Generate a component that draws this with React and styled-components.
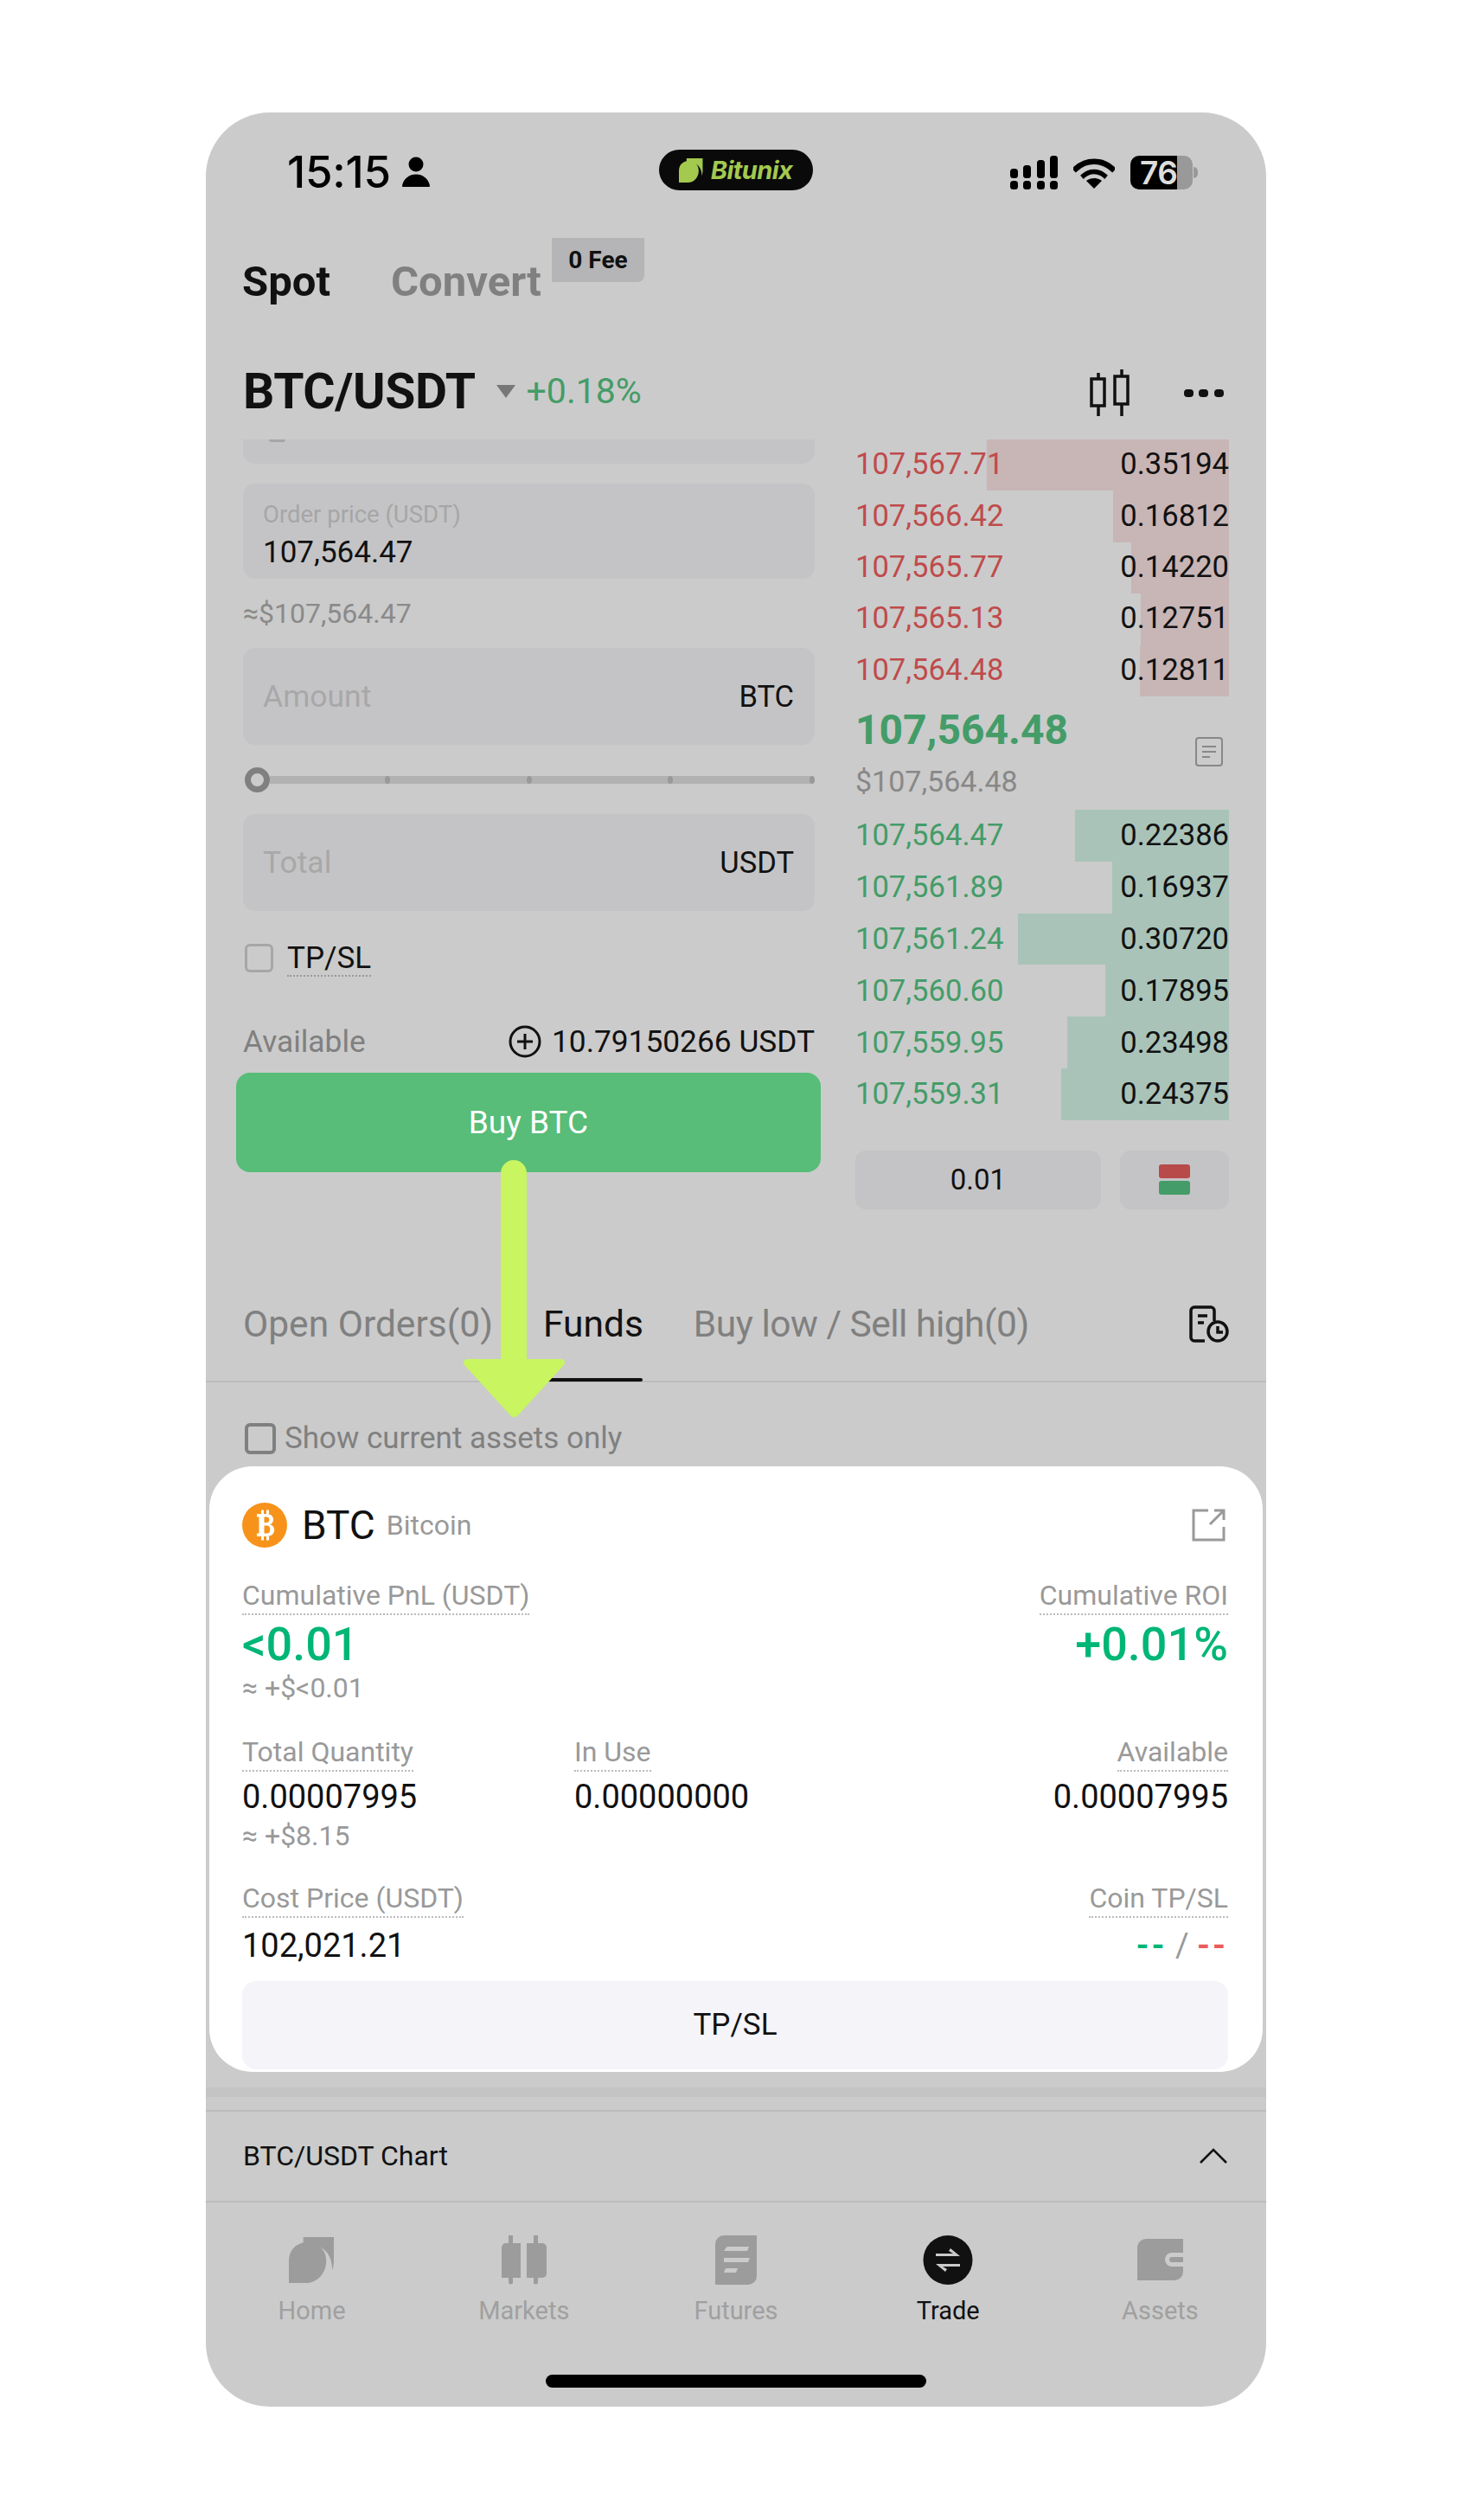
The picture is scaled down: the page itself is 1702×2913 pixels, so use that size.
import React from 'react';
import styled, { createGlobalStyle } from 'styled-components';

const GlobalStyle = createGlobalStyle`
  html, body {
    margin: 0;
    padding: 0;
    background: #fff;
    font-family: Roboto, "Liberation Sans", sans-serif;
  }
  * { box-sizing: border-box; }
`;

const Phone = styled.div`
  position: relative;
  display: flex;
  flex-direction: column;
  width: 1226px;
  height: 2652px;
  margin: 130px 0 131px 238px;
  background: #cbcbcb;
  border-radius: 74px;
  overflow: hidden;
  color: #111;
`;

const StatusBar = styled.div`
  display: grid;
  grid-template-columns: 1fr 178px 1fr;
  height: 90px;
  padding-top: 43px;
  padding-left: 94px;
  padding-right: 85px;
`;

const Clock = styled.div`
  display: flex;
  align-items: center;
  gap: 13px;
  padding-top: 2px;
  font-family: Inter, sans-serif;
  font-size: 51px;
  font-weight: 500;
  letter-spacing: -0.2px;
  line-height: 47px;
  color: #000;
`;

const Pill = styled.div`
  display: flex;
  align-items: center;
  justify-content: center;
  gap: 9px;
  height: 47px;
  margin-left: -5px;
  margin-right: 5px;
  border-radius: 24px;
  background: #0a0a0a;
  color: #a3c94f;
  font-family: Inter, sans-serif;
  font-size: 29px;
  font-weight: 700;
  font-style: italic;
  letter-spacing: -0.6px;
`;

const StatusIcons = styled.div`
  display: flex;
  align-items: center;
  justify-content: flex-end;
  gap: 18px;
  padding-top: 4px;
`;

const Battery = styled.div`
  position: relative;
  width: 72px;
  height: 39px;
  border-radius: 10px;
  background: linear-gradient(90deg, #000 54px, #999 54px);
  color: #ddd;
  font-family: Inter, sans-serif;
  font-size: 37px;
  font-weight: 600;
  line-height: 39px;
  padding-left: 11px;
  letter-spacing: -0.5px;
  &::after {
    content: '';
    position: absolute;
    right: -6px;
    top: 13px;
    width: 5px;
    height: 13px;
    border-radius: 0 5px 5px 0;
    background: #999;
  }
`;

const ModeTabs = styled.div`
  display: flex;
  align-items: center;
  gap: 70px;
  height: 70px;
  margin-top: 70px;
  margin-bottom: 2px;
  padding-left: 42px;
`;

const ModeTab = styled.div`
  position: relative;
  font-size: 49px;
  font-weight: 700;
  color: ${(p) => (p.$active ? '#111' : '#808080')};
`;

const FeeBadge = styled.span`
  position: absolute;
  left: 186px;
  top: -22px;
  width: 107px;
  height: 51px;
  display: flex;
  align-items: center;
  justify-content: center;
  background: #b5b5b7;
  border-radius: 0 0 8px 0;
  color: #111;
  font-size: 28px;
  font-weight: 700;
`;

const PairRow = styled.div`
  display: flex;
  align-items: center;
  height: 70px;
  margin-top: 55px;
  padding-left: 43px;
  padding-right: 49px;
`;

const PairName = styled.div`
  font-size: 57px;
  font-weight: 700;
  letter-spacing: -0.4px;
`;

const Caret = styled.span`
  width: 0;
  height: 0;
  margin-left: 24px;
  border-left: 11px solid transparent;
  border-right: 11px solid transparent;
  border-top: 15px solid #777;
`;

const PairChange = styled.div`
  margin-left: 13px;
  font-size: 41px;
  color: #449c68;
`;

const PairIcons = styled.div`
  margin-left: auto;
  display: flex;
  align-items: center;
  gap: 63px;
  padding-top: 3px;
`;

const TradeGrid = styled.div`
  display: grid;
  grid-template-columns: 661px 432px;
  column-gap: 47px;
  margin-top: 21px;
  padding-left: 43px;
`;

const FormColumn = styled.div`
  display: flex;
  flex-direction: column;
`;

const ClippedField = styled.div`
  position: relative;
  height: 28px;
  margin-bottom: 23px;
  background: #c4c4c6;
  border-radius: 0 0 14px 14px;
  &::before {
    content: '';
    position: absolute;
    left: 30px;
    top: 0;
    width: 19px;
    height: 3px;
    background: #a6a6a6;
    border-radius: 0 0 10px 10px;
  }
`;

const PriceField = styled.div`
  display: flex;
  flex-direction: column;
  height: 110px;
  padding: 21px 23px 0;
  background: #c4c4c6;
  border-radius: 14px;
`;

const FieldLabel = styled.div`
  font-size: 27.5px;
  line-height: 30px;
  color: #a6a6a6;
`;

const FieldValue = styled.div`
  margin-top: 9px;
  font-size: 35px;
  line-height: 40px;
  color: #111;
`;

const ApproxRow = styled.div`
  display: flex;
  align-items: center;
  height: 80px;
  font-size: 32px;
  color: #8a8a8a;
`;

const InputField = styled.div`
  display: flex;
  align-items: center;
  justify-content: space-between;
  height: 112px;
  padding: 0 24px 0 23px;
  background: #c4c4c6;
  border-radius: 14px;
  font-size: 34.5px;
  color: #111;
`;

const Placeholder = styled.span`
  font-size: 35.5px;
  color: #a8a8a8;
`;

const SliderRow = styled.div`
  display: flex;
  align-items: center;
  height: 80px;
  padding-left: 2px;
`;

const SliderThumb = styled.span`
  flex: none;
  width: 29px;
  height: 29px;
  border-radius: 50%;
  border: 7px solid #808080;
  background: #cbcbcb;
`;

const SliderTrack = styled.div`
  flex: 1;
  height: 9px;
  display: flex;
  align-items: center;
  justify-content: space-between;
  padding-left: 133px;
  background: #b2b2b2;
  border-radius: 0 5px 5px 0;
`;

const SliderTick = styled.span`
  width: 6px;
  height: 9px;
  border-radius: 50%;
  background: #999;
`;

const CheckRow = styled.div`
  display: flex;
  align-items: flex-start;
  gap: 16px;
  margin-top: 38px;
  padding-left: 2px;
`;

const Checkbox = styled.span`
  flex: none;
  width: ${(p) => p.$size}px;
  height: ${(p) => p.$size}px;
  border: ${(p) => p.$line}px solid ${(p) => p.$color};
  border-radius: 6px;
`;

const DottedLabel = styled.span`
  font-size: 35px;
  line-height: 34px;
  padding-bottom: 2px;
  border-bottom: 2px dotted #999;
  color: #111;
`;

const AvailableRow = styled.div`
  display: flex;
  align-items: center;
  justify-content: space-between;
  height: 36px;
  margin-top: 57px;
  font-size: 35.3px;
`;

const AvailableLabel = styled.span`
  color: #808080;
`;

const AvailableValue = styled.span`
  display: flex;
  align-items: center;
  gap: 12px;
  color: #111;
`;

const BuyButton = styled.div`
  display: flex;
  align-items: center;
  justify-content: center;
  height: 115px;
  margin: 18px -7px 0 -8px;
  background: #57bd78;
  border-radius: 16px;
  color: #fff;
  font-size: 37px;
`;

const BookColumn = styled.div`
  display: flex;
  flex-direction: column;
`;

const BookRow = styled.div`
  position: relative;
  display: flex;
  align-items: center;
  justify-content: space-between;
  height: ${(p) => p.$height}px;
  padding-bottom: ${(p) => p.$lift}px;
  font-size: 34.6px;
`;

const DepthBar = styled.span`
  position: absolute;
  top: 0;
  right: 0;
  bottom: 0;
  background: ${(p) => (p.$side === 'ask' ? '#c8b5b5' : '#a9c3b9')};
`;

const BookPrice = styled.span`
  position: relative;
  color: ${(p) => (p.$side === 'ask' ? '#bf4b4b' : '#449c68')};
`;

const BookQty = styled.span`
  position: relative;
  color: #111;
`;

const MidBlock = styled.div`
  position: relative;
  height: 131px;
`;

const MidPrice = styled.div`
  margin-top: 10px;
  font-size: 48px;
  line-height: 58px;
  font-weight: 700;
  color: #449c68;
`;

const MidFiat = styled.div`
  margin-top: 10px;
  font-size: 34px;
  line-height: 40px;
  color: #888;
`;

const MidIcon = styled.span`
  position: absolute;
  right: 7px;
  top: 47px;
`;

const BookControls = styled.div`
  display: grid;
  grid-template-columns: 284px 126px;
  justify-content: space-between;
  height: 68px;
  margin-top: 35px;
`;

const ControlBox = styled.div`
  display: flex;
  flex-direction: ${(p) => (p.$stack ? 'column' : 'row')};
  align-items: center;
  justify-content: center;
  gap: 3px;
  background: #c4c4c6;
  border-radius: 12px;
  font-size: 33px;
  color: #111;
`;

const SideBar = styled.span`
  width: 36px;
  height: 16px;
  border-radius: 3px;
  background: ${(p) => p.$color};
`;

const OrderTabs = styled.div`
  display: flex;
  align-items: stretch;
  height: 132px;
  margin-top: 68px;
  padding: 0 43px;
  border-bottom: 2px solid #bcbcbc;
`;

const OrderTab = styled.div`
  position: relative;
  display: flex;
  align-items: center;
  margin-right: ${(p) => p.$gap}px;
  font-size: 42.5px;
  letter-spacing: ${(p) => (p.$tight ? '-0.5px' : '0')};
  color: ${(p) => (p.$active ? '#111' : '#808080')};
  &::after {
    content: '';
    display: ${(p) => (p.$active ? 'block' : 'none')};
    position: absolute;
    left: 0;
    right: 1px;
    bottom: -1px;
    height: 4px;
    background: #111;
    border-radius: 2px;
  }
`;

const OrdersIcon = styled.div`
  margin-left: auto;
  display: flex;
  align-items: center;
`;

const ShowRow = styled.div`
  display: flex;
  align-items: center;
  gap: 10px;
  margin-top: 47px;
  padding-left: 45px;
  font-size: 35px;
  line-height: 35px;
  color: #808080;
`;

const AssetCard = styled.div`
  height: 700px;
  margin: 14px 4px 0;
  padding: 43px 40px 0 38px;
  background: #fff;
  border-radius: 50px;
`;

const AssetHead = styled.div`
  display: flex;
  align-items: center;
  height: 51px;
`;

const AssetSymbol = styled.span`
  margin-left: 17px;
  font-size: 46px;
  color: #111;
`;

const AssetName = styled.span`
  margin-left: 13px;
  font-size: 32px;
  color: #999;
`;

const HeadLink = styled.span`
  margin-left: auto;
  margin-right: 3px;
  display: flex;
`;

const MetricRow = styled.div`
  display: grid;
  grid-template-columns: 384px 1fr auto;
  margin-top: ${(p) => p.$top}px;
`;

const Metric = styled.div`
  display: flex;
  flex-direction: column;
  align-items: ${(p) => (p.$right ? 'flex-end' : 'flex-start')};
  grid-column: ${(p) => (p.$right ? 3 : 'auto')};
`;

const MetricLabel = styled.span`
  font-size: 32px;
  line-height: 41px;
  border-bottom: 2px dotted #bbb;
  color: #999;
`;

const MetricBig = styled.span`
  margin-top: 6px;
  font-size: 54px;
  line-height: 56px;
  font-weight: 500;
  color: #00b676;
`;

const MetricValue = styled.span`
  margin-top: ${(p) => p.$top}px;
  font-size: 38px;
  line-height: 46px;
  color: #111;
`;

const MetricSub = styled.span`
  margin-top: ${(p) => p.$top}px;
  font-size: 32px;
  line-height: 40px;
  color: #999;
`;

const TpSlValue = styled.span`
  margin-top: 9px;
  font-size: 38px;
  line-height: 46px;
  color: #999;
`;

const Dash = styled.span`
  font-weight: 700;
  letter-spacing: 3px;
  color: ${(p) => p.$color};
`;

const TpSlButton = styled.div`
  display: flex;
  align-items: center;
  justify-content: center;
  height: 102px;
  margin-top: 18px;
  background: #f4f4f9;
  border-radius: 16px;
  font-size: 35px;
  color: #111;
`;

const Band = styled.div`
  height: 11px;
  margin-top: 18px;
  background: #c4c4c4;
`;

const ChartRow = styled.div`
  display: flex;
  align-items: center;
  justify-content: space-between;
  height: 107px;
  margin-top: 15px;
  padding: 0 45px 0 43px;
  border-top: 2px solid #bcbcbc;
  border-bottom: 2px solid #bcbcbc;
  font-size: 32px;
`;

const NavBar = styled.div`
  display: grid;
  grid-template-columns: repeat(5, 1fr);
  margin-top: 38px;
`;

const NavItem = styled.div`
  display: flex;
  flex-direction: column;
  align-items: center;
  color: ${(p) => (p.$active ? '#111' : '#a0a0a0')};
  font-size: 29px;
  line-height: 36px;
`;

const NavIcon = styled.div`
  display: flex;
  align-items: center;
  justify-content: center;
  height: 57px;
  margin-bottom: 12px;
`;

const HomeBar = styled.div`
  width: 440px;
  height: 15px;
  margin: auto auto 22px;
  background: #000;
  border-radius: 8px;
`;

const Arrow = styled.svg`
  position: absolute;
  left: 297px;
  top: 1211px;
`;

const asks = [
  ['107,567.71', '0.35194', 280],
  ['107,566.42', '0.16812', 134],
  ['107,565.77', '0.14220', 113],
  ['107,565.13', '0.12751', 102],
  ['107,564.48', '0.12811', 103],
];

const bids = [
  ['107,564.47', '0.22386', 178],
  ['107,561.89', '0.16937', 135],
  ['107,561.24', '0.30720', 244],
  ['107,560.60', '0.17895', 143],
  ['107,559.95', '0.23498', 187],
  ['107,559.31', '0.24375', 194],
];

const PersonIcon = () => (
  <svg width="32" height="35" viewBox="0 0 32 35">
    <circle cx="16" cy="9" r="8.5" fill="#000" />
    <path d="M1 35c-1.500 0-1-1.500-.6-3C2.500 25 8.500 20.500 16 20.500S29.500 25 31.600 32c.4 1.500.9 3-.6 3z" fill="#000" />
  </svg>
);

const LeafMark = ({ color, size }) => (
  <svg width={size} height={size} viewBox="0 0 54 54">
    <path d="M18 0h36v28c0 4-1 8-2 11 .8-16-9-30-26-30-3 0-6 .5-8 1z" fill={color} transform="translate(-1 0)" />
    <path d="M0 54V28C0 14 10 6 22 6c14 0 22 10 22 22 0 14-10 26-24 26z" fill={color} />
  </svg>
);

const SignalIcon = () => (
  <svg width="55" height="39" viewBox="0 0 55 39" fill="#000">
    <rect x="0" y="15" width="9" height="11" rx="3.500" />
    <rect x="15" y="11" width="9" height="15" rx="3.500" />
    <rect x="31" y="5" width="9" height="21" rx="3.500" />
    <rect x="46" y="0" width="9" height="26" rx="3.500" />
    <rect x="0" y="29" width="9" height="10" rx="3.500" />
    <rect x="15" y="29" width="9" height="10" rx="3.500" />
    <rect x="31" y="29" width="9" height="10" rx="3.500" />
    <rect x="46" y="29" width="9" height="10" rx="3.500" />
  </svg>
);

const WifiIcon = () => (
  <svg width="48" height="36" viewBox="0 0 48 36">
    <path d="M3 13C15 2 33 2 45 13" fill="none" stroke="#000" strokeWidth="6.500" strokeLinecap="square" />
    <path d="M12 21c7-6 17-6 24 0" fill="none" stroke="#000" strokeWidth="5.500" strokeLinecap="square" />
    <path d="M24 36l-9-9c5-4 13-4 18 0z" fill="#000" />
  </svg>
);

const CandleIcon = () => (
  <svg width="46" height="54" viewBox="0 0 46 54" fill="none" stroke="#111" strokeWidth="3.500">
    <rect x="2" y="11" width="15" height="31" />
    <rect x="29" y="8" width="15" height="32" />
    <path d="M10 4v7M10 42v12M37 0v8M37 40v14" />
  </svg>
);

const DotsIcon = () => (
  <svg width="46" height="12" viewBox="0 0 46 12" fill="#111">
    <rect x="0" y="2" width="11" height="9" rx="4" />
    <rect x="17" y="2" width="11" height="9" rx="4" />
    <rect x="35" y="2" width="11" height="9" rx="4" />
  </svg>
);

const CirclePlusIcon = () => (
  <svg width="38" height="38" viewBox="0 0 38 38" fill="none" stroke="#111" strokeWidth="3">
    <circle cx="19" cy="19" r="17" />
    <path d="M10 19h18M19 10v18" />
  </svg>
);

const NoteIcon = () => (
  <svg width="32" height="34" viewBox="0 0 32 34" fill="none" stroke="#888" strokeWidth="2">
    <rect x="1" y="1" width="30" height="32" rx="3" />
    <path d="M8 11h16M8 17h16M8 23h9" />
  </svg>
);

const OrdersHistoryIcon = () => (
  <svg width="46" height="43" viewBox="0 0 46 43" fill="none" stroke="#111" strokeWidth="3.500">
    <path d="M18 41H6a4 4 0 0 1-4-4V6a4 4 0 0 1 4-4h19a4 4 0 0 1 4 4v12" />
    <path d="M10 12h11M10 20h7" />
    <circle cx="33" cy="30" r="11" />
    <path d="M33 24v7h6" />
  </svg>
);

const BitcoinIcon = () => (
  <svg width="52" height="52" viewBox="0 0 52 52">
    <circle cx="26" cy="26" r="26" fill="#f7931a" />
    <path
      fillRule="evenodd"
      d="M17 13h11c5 0 8 2.500 8 6.500 0 3-1.500 5-4 5.800 3.200.7 5.200 3 5.200 6.200 0 4.500-3.400 7.500-9 7.500H17v-3.500h2.500V16.500H17zm8.500 3.500v6.500h2.500c2.300 0 3.300-1.100 3.300-3.250s-1-3.250-3.300-3.250zm0 10v9h3c2.700 0 3.800-1.500 3.800-4.500s-1.100-4.500-3.800-4.500zM22 8.500h3V13h-3zm6 0h3V13h-3zM22 39h3v4.500h-3zm6 0h3v4.500h-3z"
      fill="#fff"
    />
  </svg>
);

const ExportIcon = () => (
  <svg width="39" height="38" viewBox="0 0 39 38" fill="none" stroke="#999" strokeWidth="3">
    <path d="M19 2H2v34h35V21" />
    <path d="M21 18L37 2M26 2h11v11" />
  </svg>
);

const ChevronIcon = () => (
  <svg width="32" height="18" viewBox="0 0 32 18" fill="none" stroke="#111" strokeWidth="2.500">
    <path d="M1 17L16 2l15 15" />
  </svg>
);

const HomeNavIcon = () => <LeafMark color="#9c9c9c" size={53} />;

const MarketsNavIcon = () => (
  <svg width="52" height="57" viewBox="0 0 52 57" fill="#9c9c9c">
    <path d="M8 9V0h5v9h9v40h-9v5a2.500 2.500 0 0 1-5 0v-5H0V14a5 5 0 0 1 5-5z" />
    <path d="M37 9V0h5v9h5a5 5 0 0 1 5 5v30a5 5 0 0 1-5 5h-5v5a2.500 2.500 0 0 1-5 0v-5h-8V9z" />
  </svg>
);

const FuturesNavIcon = () => (
  <svg width="48" height="57" viewBox="0 0 48 57" fill="#9c9c9c">
    <path d="M0 10A10 10 0 0 1 10 0h38v47a10 10 0 0 1-10 10H0z" />
    <path d="M12 15a3 3 0 0 1 3-2h24l-2 5H10zM10 26h30l-2 5H10zM11 40a3 3 0 0 1 3-2h12l-2 5H10z" fill="#cbcbcb" />
  </svg>
);

const TradeNavIcon = () => (
  <svg width="58" height="57" viewBox="0 0 58 57">
    <ellipse cx="29" cy="28.500" rx="28.500" ry="28.500" fill="#111" />
    <path d="M15 24h28l-11-9-2 3 5 3H15zM43 33H15l11 9 2-3-5-3h20z" fill="#cbcbcb" />
  </svg>
);

const AssetsNavIcon = () => (
  <svg width="53" height="48" viewBox="0 0 53 48">
    <path d="M0 10A10 10 0 0 1 10 0h43v38a10 10 0 0 1-10 10H0z" fill="#9c9c9c" />
    <path d="M53 16H40a8 8 0 0 0 0 16h13v-5H40a3 3 0 0 1 0-6h13z" fill="#cbcbcb" />
  </svg>
);

const navItems = [
  ['Home', <HomeNavIcon />],
  ['Markets', <MarketsNavIcon />],
  ['Futures', <FuturesNavIcon />],
  ['Trade', <TradeNavIcon />, true],
  ['Assets', <AssetsNavIcon />],
];

export default function App() {
  return (
    <>
      <GlobalStyle />
      <Phone>
        <StatusBar>
          <Clock>
            15:15
            <PersonIcon />
          </Clock>
          <Pill>
            <LeafMark color="#a3c94f" size={28} />
            Bitunix
          </Pill>
          <StatusIcons>
            <SignalIcon />
            <WifiIcon />
            <Battery>76</Battery>
          </StatusIcons>
        </StatusBar>

        <ModeTabs>
          <ModeTab $active>Spot</ModeTab>
          <ModeTab>
            Convert
            <FeeBadge>0 Fee</FeeBadge>
          </ModeTab>
        </ModeTabs>

        <PairRow>
          <PairName>BTC/USDT</PairName>
          <Caret />
          <PairChange>+0.18%</PairChange>
          <PairIcons>
            <CandleIcon />
            <DotsIcon />
          </PairIcons>
        </PairRow>

        <TradeGrid>
          <FormColumn>
            <ClippedField />
            <PriceField>
              <FieldLabel>Order price (USDT)</FieldLabel>
              <FieldValue>107,564.47</FieldValue>
            </PriceField>
            <ApproxRow>≈$107,564.47</ApproxRow>
            <InputField>
              <Placeholder>Amount</Placeholder>
              BTC
            </InputField>
            <SliderRow>
              <SliderThumb />
              <SliderTrack>
                <SliderTick />
                <SliderTick />
                <SliderTick />
                <SliderTick />
              </SliderTrack>
            </SliderRow>
            <InputField>
              <Placeholder>Total</Placeholder>
              USDT
            </InputField>
            <CheckRow>
              <Checkbox $size={33} $line={3} $color="#a6a6a6" />
              <DottedLabel>TP/SL</DottedLabel>
            </CheckRow>
            <AvailableRow>
              <AvailableLabel>Available</AvailableLabel>
              <AvailableValue>
                <CirclePlusIcon />
                10.79150266 USDT
              </AvailableValue>
            </AvailableRow>
            <BuyButton>Buy BTC</BuyButton>
          </FormColumn>

          <BookColumn>
            {asks.map(([price, qty, depth]) => (
              <BookRow key={price + qty} $height={59.4} $lift={3}>
                <DepthBar $side="ask" style={{ width: depth }} />
                <BookPrice $side="ask">{price}</BookPrice>
                <BookQty>{qty}</BookQty>
              </BookRow>
            ))}
            <MidBlock>
              <MidPrice>107,564.48</MidPrice>
              <MidFiat>$107,564.48</MidFiat>
              <MidIcon>
                <NoteIcon />
              </MidIcon>
            </MidBlock>
            {bids.map(([price, qty, depth]) => (
              <BookRow key={price + qty} $height={59.8} $lift={1}>
                <DepthBar $side="bid" style={{ width: depth }} />
                <BookPrice $side="bid">{price}</BookPrice>
                <BookQty>{qty}</BookQty>
              </BookRow>
            ))}
            <BookControls>
              <ControlBox>0.01</ControlBox>
              <ControlBox $stack>
                <SideBar $color="#b84a4a" />
                <SideBar $color="#449c68" />
              </ControlBox>
            </BookControls>
          </BookColumn>
        </TradeGrid>

        <OrderTabs>
          <OrderTab $gap={58}>Open Orders(0)</OrderTab>
          <OrderTab $gap={58} $active>Funds</OrderTab>
          <OrderTab $tight>Buy low / Sell high(0)</OrderTab>
          <OrdersIcon>
            <OrdersHistoryIcon />
          </OrdersIcon>
        </OrderTabs>

        <ShowRow>
          <Checkbox $size={36} $line={4} $color="#808080" />
          Show current assets only
        </ShowRow>

        <AssetCard>
          <AssetHead>
            <BitcoinIcon />
            <AssetSymbol>BTC</AssetSymbol>
            <AssetName>Bitcoin</AssetName>
            <HeadLink>
              <ExportIcon />
            </HeadLink>
          </AssetHead>

          <MetricRow $top={35}>
            <Metric>
              <MetricLabel>Cumulative PnL (USDT)</MetricLabel>
              <MetricBig>&lt;0.01</MetricBig>
              <MetricSub $top={2}>≈ +$&lt;0.01</MetricSub>
            </Metric>
            <Metric $right>
              <MetricLabel>Cumulative ROI</MetricLabel>
              <MetricBig>+0.01%</MetricBig>
            </Metric>
          </MetricRow>

          <MetricRow $top={34}>
            <Metric>
              <MetricLabel>Total Quantity</MetricLabel>
              <MetricValue $top={6}>0.00007995</MetricValue>
              <MetricSub $top={2}>≈ +$8.15</MetricSub>
            </Metric>
            <Metric>
              <MetricLabel>In Use</MetricLabel>
              <MetricValue $top={6}>0.00000000</MetricValue>
            </Metric>
            <Metric $right>
              <MetricLabel>Available</MetricLabel>
              <MetricValue $top={6}>0.00007995</MetricValue>
            </Metric>
          </MetricRow>

          <MetricRow $top={32}>
            <Metric>
              <MetricLabel>Cost Price (USDT)</MetricLabel>
              <MetricValue $top={9}>102,021.21</MetricValue>
            </Metric>
            <Metric $right>
              <MetricLabel>Coin TP/SL</MetricLabel>
              <TpSlValue>
                <Dash $color="#00b676">--</Dash> / <Dash $color="#eb5b5b">--</Dash>
              </TpSlValue>
            </Metric>
          </MetricRow>

          <TpSlButton>TP/SL</TpSlButton>
        </AssetCard>

        <Band />
        <ChartRow>
          BTC/USDT Chart
          <ChevronIcon />
        </ChartRow>

        <NavBar>
          {navItems.map(([label, icon, active]) => (
            <NavItem key={label} $active={active}>
              <NavIcon>{icon}</NavIcon>
              {label}
            </NavItem>
          ))}
        </NavBar>

        <HomeBar />

        <Arrow width="119" height="298" viewBox="0 0 119 298">
          <path
            d="M44 15a15 15 0 0 1 30 0v215h38c6 0 8 4 4 8l-52 57c-3 3-6 3-9 0L3 238c-4-4-2-8 4-8h37z"
            fill="#c8f560"
          />
        </Arrow>
      </Phone>
    </>
  );
}
